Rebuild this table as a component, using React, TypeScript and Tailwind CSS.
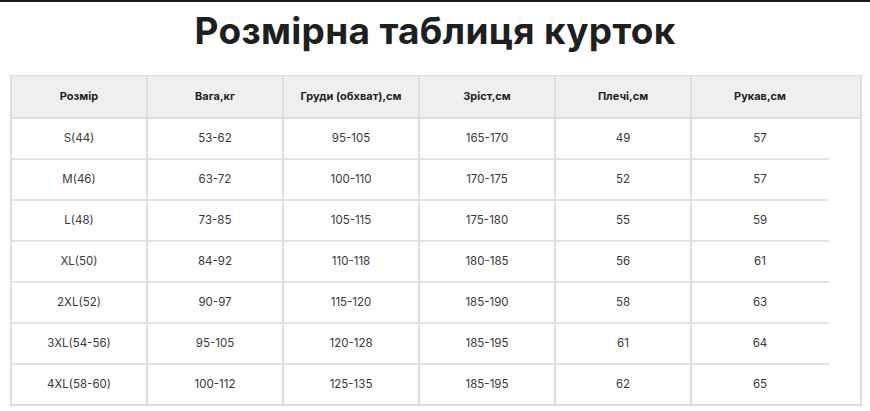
import React from 'react';

const headers = ['Розмір', 'Вага,кг', 'Груди (обхват),см', 'Зріст,см', 'Плечі,см', 'Рукав,см'];

const rows = [
  ['S(44)', '53-62', '95-105', '165-170', '49', '57'],
  ['M(46)', '63-72', '100-110', '170-175', '52', '57'],
  ['L(48)', '73-85', '105-115', '175-180', '55', '59'],
  ['XL(50)', '84-92', '110-118', '180-185', '56', '61'],
  ['2XL(52)', '90-97', '115-120', '185-190', '58', '63'],
  ['3XL(54-56)', '95-105', '120-128', '185-195', '61', '64'],
  ['4XL(58-60)', '100-112', '125-135', '185-195', '62', '65'],
];

export default function App() {
  return (
    <div className="w-[870px] h-[411px] bg-white border-t-2 border-[#1c1c1c] font-['Inter',sans-serif] text-[#2a2a2a] overflow-hidden">
      <h1 className="text-center text-[37px] font-bold leading-none tracking-[0.3px] text-[#1f1f1f] pt-[10px] h-[73px]">
        Розмірна таблиця курток
      </h1>

      <div className="ml-[10px] w-[852px] border-x-2 border-b-2 border-t border-[#dedede]">
        {/* Header */}
        <div className="flex bg-[#efefef] border-b-2 border-[#dedede]">
          {headers.map((h, i) => (
            <div
              key={h}
              className={`w-[136px] h-[41px] flex items-center justify-center text-[11px] font-bold text-[#1f1f1f] ${
                i < 5 ? 'border-r-2 border-[#dedede]' : ''
              }`}
            >
              {h}
            </div>
          ))}
          <div className="flex-1" />
        </div>

        {/* Body */}
        {rows.map((r, ri) => (
          <div key={ri} className="flex">
            <div
              className={`flex w-[817px] ${ri < rows.length - 1 ? 'border-b-2 border-[#e2e2e2]' : ''}`}
            >
              {r.map((c, ci) => (
                <div
                  key={ci}
                  className={`w-[136px] h-[39px] flex items-center justify-center text-[11.5px] text-[#383838] ${
                    ci < 5 ? 'border-r-2 border-[#dedede]' : ''
                  }`}
                >
                  {c}
                </div>
              ))}
            </div>
            <div className="flex-1" />
          </div>
        ))}
      </div>
    </div>
  );
}
